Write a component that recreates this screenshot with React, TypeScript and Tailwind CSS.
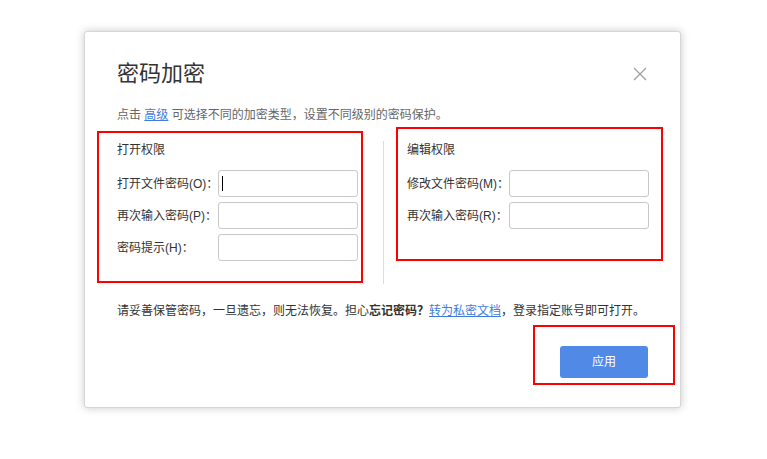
import React from "react";

const FONT = "font-['Liberation_Sans','Noto_Sans_CJK_SC',sans-serif]";

function Field({ label, cursor, wide }: { label: string; cursor?: boolean; wide?: boolean }) {
  return (
    <div className="flex items-center h-[27px]">
      <span className={`${wide ? "w-[102px]" : "w-[101px]"} shrink-0 whitespace-nowrap text-[12px] leading-[18px] text-[#333]`}>{label}</span>
      <div className="relative w-[140px] h-[27px] rounded-[3px] border border-[#c8c8c8] bg-white">
        {cursor && <span className="absolute left-[3px] top-[5px] h-[15px] w-px bg-black" />}
      </div>
    </div>
  );
}

export default function App() {
  return (
    <div className={`min-h-[459px] w-[767px] bg-white pl-[84px] pt-[31px] ${FONT}`}>
      <div className="relative flex h-[377px] w-[597px] flex-col rounded-[3px] border border-[#d6d6d6] bg-white px-[32px] shadow-[0_0_8px_rgba(0,0,0,0.22)]">
        {/* header */}
        <div className="mt-[27px] flex h-[30px] items-center justify-between">
          <h1 className="text-[22px] leading-[30px] text-[#333]">密码加密</h1>
          <svg width="14" height="14" viewBox="0 0 14 14" className="mr-[1px]">
            <path d="M1 1L13 13M13 1L1 13" stroke="#a0a0a0" strokeWidth="1.3" fill="none" />
          </svg>
        </div>

        <p className="mt-[17px] text-[12px] leading-[18px] text-[#666]">
          点击 <span className="text-[#3f7be0] underline">高级</span> 可选择不同的加密类型，设置不同级别的密码保护。
        </p>

        {/* permissions */}
        <div className="mt-[17px] flex items-stretch">
          <div className="w-[241px] shrink-0 pb-[23px]">
            <div className="text-[12px] leading-[18px] text-[#333]">打开权限</div>
            <div className="mt-[11px] flex flex-col gap-[5px]">
              <Field label="打开文件密码(O)：" cursor />
              <Field label="再次输入密码(P)：" />
              <Field label="密码提示(H)：" />
            </div>
          </div>
          <div className="ml-[25px] w-px shrink-0 bg-[#dcdcdc]" />
          <div className="ml-[23px] flex-1">
            <div className="text-[12px] leading-[18px] text-[#333]">编辑权限</div>
            <div className="mt-[11px] flex flex-col gap-[5px]">
              <Field label="修改文件密码(M)：" wide />
              <Field label="再次输入密码(R)：" wide />
            </div>
          </div>
        </div>

        <p className="mt-[18px] text-[12px] leading-[18px] text-[#333]">
          请妥善保管密码，一旦遗忘，则无法恢复。担心<span className="font-bold">忘记密码？</span>
          <span className="text-[#3f7be0] underline">转为私密文档</span>，登录指定账号即可打开。
        </p>

        <div className="mt-[26px] flex justify-end">
          <button className="h-[32px] w-[88px] rounded-[3px] bg-[#5189e6] text-[12px] text-white">应用</button>
        </div>

        {/* annotation boxes */}
        <div className="pointer-events-none absolute left-[12px] top-[99px] h-[152px] w-[266px] border-2 border-[#f00]" />
        <div className="pointer-events-none absolute left-[311px] top-[95px] h-[134px] w-[267px] border-2 border-[#f00]" />
        <div className="pointer-events-none absolute left-[448px] top-[293px] h-[60px] w-[142px] border-2 border-[#f00]" />
      </div>
    </div>
  );
}
